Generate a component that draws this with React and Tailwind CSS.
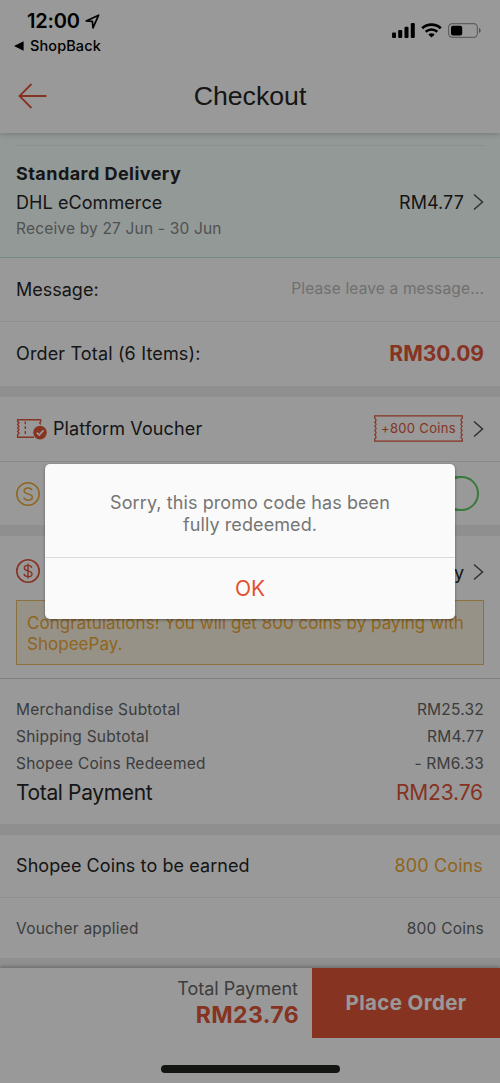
import React, { useState } from "react";

const summary = [
  { label: "Merchandise Subtotal", value: "RM25.32" },
  { label: "Shipping Subtotal", value: "RM4.77" },
  { label: "Shopee Coins Redeemed", value: "- RM6.33" },
];

const Chevron = () => (
  <svg className="ml-[9px] h-[18px] w-[11px]" viewBox="0 0 11 18" fill="none">
    <path d="M1 1.5L9.5 9L1 16.5" stroke="#50505f" strokeWidth="1.5" />
  </svg>
);

const Gap = () => <div className="h-[11px] shrink-0 bg-[#eeeeee]" />;

const StatusBar = () => (
  <div className="flex h-[60px] justify-between text-black">
    <div className="pl-[14px] pt-[9px]">
      <div className="flex h-6 items-center pl-[13px]">
        <span className="text-[20px] font-semibold leading-6 tracking-[-0.2px]">12:00</span>
        <svg className="ml-[5px] h-[15px] w-[15px]" viewBox="0 0 15 15" fill="none">
          <path d="M1.2 6.9L13.6 1.2L8 13.8L7.4 7.4Z" stroke="#000" strokeWidth="1.7" strokeLinejoin="round" />
        </svg>
      </div>
      <div className="flex h-6 items-center pt-px">
        <svg className="h-[10px] w-[10px]" viewBox="0 0 10 10">
          <path d="M0 5L9.6 0.3V9.7Z" fill="#000" />
        </svg>
        <span className="ml-[6px] text-[14.5px] font-medium leading-6 tracking-[0.1px]">ShopBack</span>
      </div>
    </div>
    <div className="flex items-start pr-[19px] pt-[23px]">
      <svg className="h-[15px] w-[23px]" viewBox="0 0 23 15">
        <rect x="0" y="9.5" width="4" height="5.5" rx="1" />
        <rect x="6.2" y="7" width="4" height="8" rx="1" />
        <rect x="12.5" y="3.8" width="4" height="11.2" rx="1" />
        <rect x="18.8" y="0" width="4" height="15" rx="1" />
      </svg>
      <svg className="ml-[6px] h-[15px] w-[21px]" viewBox="0 0 21 15" fill="none">
        <path d="M1.2 5.2C6.4 0.3 14.6 0.3 19.8 5.2" stroke="#000" strokeWidth="2.7" />
        <path d="M4.7 8.8C8 5.8 13 5.8 16.3 8.8" stroke="#000" strokeWidth="2.6" />
        <path d="M10.5 14.6L7.3 11.5C9.1 9.9 11.9 9.9 13.7 11.5Z" fill="#000" />
      </svg>
      <svg className="ml-[6px] h-[15px] w-[33px]" viewBox="0 0 33 15" fill="none">
        <rect x="0.6" y="0.6" width="28.8" height="13.8" rx="3.8" stroke="#a0a0a0" strokeWidth="1.2" />
        <rect x="3" y="2.8" width="11.2" height="9.6" rx="2" fill="#000" />
        <path d="M31 5V10C33.2 9.2 33.2 5.8 31 5Z" fill="#8a8a8a" />
      </svg>
    </div>
  </div>
);

const VoucherIcon = () => (
  <svg className="h-[22px] w-[31px]" viewBox="0 0 31 22" fill="none">
    <path
      d="M25 1.8H1.6V3.6L3 4.8L1.6 6.5L3 8.2L1.6 9.9L3 11.6L1.6 13.3L3 15L1.6 16.7V19.2H18"
      stroke="#e0553a"
      strokeWidth="1.4"
    />
    <path d="M24.8 1.8V3.6L23.6 4.8L24.8 6.4" stroke="#e0553a" strokeWidth="1.3" />
    <path d="M9.3 3.5V18" stroke="#e0553a" strokeWidth="1.4" strokeDasharray="2.8 2" />
    <circle cx="24" cy="14.6" r="6.8" fill="#e0553a" />
    <path d="M20.8 14.6L23.2 17L27.4 12.4" stroke="#fff" strokeWidth="1.7" />
  </svg>
);

const CoinsBadge = () => (
  <div className="relative flex h-[27px] w-[89px] items-center justify-center">
    <svg className="absolute inset-0 h-[27px] w-[89px]" viewBox="0 0 89 27" fill="none">
      <path
        d="M0.7 0.8H88.3V3Q85.6 5.2 88.3 7.2Q85.6 9.3 88.3 11.4Q85.6 13.5 88.3 15.6Q85.6 17.7 88.3 19.8Q85.6 21.9 88.3 24V26.2H0.7V24Q3.4 21.9 0.7 19.8Q3.4 17.7 0.7 15.6Q3.4 13.5 0.7 11.4Q3.4 9.3 0.7 7.2Q3.4 5.2 0.7 3Z"
        stroke="#e0553a"
        strokeWidth="1.2"
      />
    </svg>
    <span className="text-[13px] tracking-[0.32px] text-[#e0553a]">+800 Coins</span>
  </div>
);

const App = () => {
  const [open, setOpen] = useState(true);
  const [useCoins, setUseCoins] = useState(true);

  return (
    <div className="relative flex h-[1083px] w-[500px] flex-col overflow-hidden whitespace-nowrap bg-white font-['Inter',sans-serif] text-[18px] text-[#262626]">
      <header className="z-10 h-[133px] shrink-0 bg-white shadow-[0_1px_6px_rgba(0,0,0,0.22)]">
        <StatusBar />
        <div className="grid h-[73px] grid-cols-[80px_1fr_80px] items-center">
          <svg className="mb-px ml-[18px] h-[26px] w-[29px]" viewBox="0 0 29 26" fill="none">
            <path d="M28.5 13H1.5M13.5 1L1.5 13L13.5 25" stroke="#e0553a" strokeWidth="1.8" />
          </svg>
          <h1 className="text-center font-['Liberation_Sans',sans-serif] text-[26.7px]">Checkout</h1>
        </div>
      </header>

      <section className="h-[125px] shrink-0 border-b border-[#bce6de] bg-[#f6fffc] px-4 pt-[12px]">
        <div className="h-px bg-[#e9efed]" />
        <div className="mt-[14px] text-[18px] font-bold leading-7 tracking-[0.45px]">Standard Delivery</div>
        <div className="flex h-7 items-center justify-between tracking-[0.08px]">
          <span>DHL eCommerce</span>
          <span className="flex items-center">
            RM4.77
            <Chevron />
          </span>
        </div>
        <div className="text-[15.5px] leading-[26px] tracking-[0.18px] text-[#888888]">Receive by 27 Jun - 30 Jun</div>
      </section>

      <section className="shrink-0 bg-white">
        <div className="flex h-[64px] items-center justify-between border-b border-[#eeeeee] px-4">
          <span>Message:</span>
          <span className="pb-[2px] text-[15.5px] tracking-[0.15px] text-[#bbbbbb]">Please leave a message...</span>
        </div>
        <div className="flex h-[64px] items-center justify-between px-4">
          <span className="pb-px tracking-[0.15px]">Order Total (6 Items):</span>
          <span className="text-[21px] font-bold text-[#e0553a]">RM30.09</span>
        </div>
      </section>
      <Gap />

      <section className="shrink-0 bg-white">
        <div className="flex h-[65px] items-center justify-between border-b border-[#e6e6e6] px-4">
          <span className="flex items-center">
            <VoucherIcon />
            <span className="ml-[6px] pb-[2px] tracking-[0.12px]">Platform Voucher</span>
          </span>
          <span className="flex items-center pb-px">
            <CoinsBadge />
            <span className="ml-[1px]">
              <Chevron />
            </span>
          </span>
        </div>
        <div className="flex h-[63px] items-center justify-between px-4">
          <span className="flex items-center">
            <svg className="h-6 w-6" viewBox="0 0 24 24" fill="none" stroke="#f0a934">
              <circle cx="12" cy="12" r="11.2" strokeWidth="1.5" />
              <path d="M16 8.3C15.3 6.6 13.8 6 12 6C9.7 6 8.2 7.1 8.2 8.9C8.2 13 16.4 10.8 16.4 15.1C16.4 17 14.7 18.2 12.3 18.2C10 18.2 8.3 17.2 7.8 15.4" strokeWidth="1.5" />
            </svg>
          </span>
          <button
            onClick={() => setUseCoins(!useCoins)}
            className={`mr-[5px] flex h-[35px] w-[55px] items-center rounded-full p-[2px] ${
              useCoins ? "justify-end bg-[#5ccb62]" : "justify-start bg-gray-300"
            }`}
          >
            <span className="h-[31px] w-[31px] rounded-full bg-white" />
          </button>
        </div>
      </section>
      <Gap />

      <section className="h-[143px] shrink-0 border-b border-[#d8d8d8] bg-white px-4">
        <div className="flex h-[64px] items-center justify-between pt-[6px]">
          <svg className="h-6 w-6" viewBox="0 0 24 24" fill="none" stroke="#e0553a">
            <circle cx="12" cy="12" r="11.2" strokeWidth="1.6" />
            <path d="M15.8 8.8C15.4 7.2 14 6.4 12 6.4C9.8 6.4 8.3 7.4 8.3 9C8.3 13 16 10.8 16 14.9C16 16.6 14.4 17.6 12.1 17.6C9.8 17.6 8.3 16.6 8 14.9M12 4.4V19.6" strokeWidth="1.4" />
          </svg>
          <span className="flex items-center pt-[2px]">
            ShopeePay
            <Chevron />
          </span>
        </div>
        <div className="h-[65px] border border-[#e6bd68] bg-[#fbf4e1] pl-[10px] pt-[12px] text-[17px] leading-[21px] tracking-[0.03px] text-[#eea834]">
          Congratulations! You will get 800 coins by paying with
          <br />
          ShopeePay.
        </div>
      </section>

      <section className="h-[145px] shrink-0 bg-white px-4 pt-[17px]">
        {summary.map((row) => (
          <div
            key={row.label}
            className="flex h-[27px] items-center justify-between text-[15.5px] tracking-[0.23px] text-[#666666]"
          >
            <span>{row.label}</span>
            <span>{row.value}</span>
          </div>
        ))}
        <div className="flex h-[32px] items-center justify-between text-[21px]">
          <span className="tracking-[-0.36px]">Total Payment</span>
          <span className="pr-px tracking-[-0.15px] text-[#e0553a]">RM23.76</span>
        </div>
      </section>
      <Gap />

      <section className="shrink-0 bg-white">
        <div className="flex h-[63px] items-center justify-between border-b border-[#eeeeee] px-4 pb-[2px]">
          <span className="tracking-[0.08px]">Shopee Coins to be earned</span>
          <span className="pr-px tracking-[0.12px] text-[#eea834]">800 Coins</span>
        </div>
        <div className="flex h-[60px] items-center justify-between px-4 pt-px text-[15.5px] tracking-[0.22px] text-[#666666]">
          <span>Voucher applied</span>
          <span>800 Coins</span>
        </div>
      </section>
      <div className="h-[10px] shrink-0 bg-[#eeeeee]" />

      <footer className="h-[115px] shrink-0 bg-white shadow-[0_-1px_4px_rgba(0,0,0,0.3)]">
        <div className="flex h-[70px] justify-end">
          <div className="pr-[14px] pt-[8px] text-right">
            <div className="text-[18px] leading-[26px] text-[#666666]">Total Payment</div>
            <div className="-mr-px text-[23px] font-bold leading-[26px] tracking-[0.4px] text-[#e0553a]">RM23.76</div>
          </div>
          <button className="h-[70px] w-[188px] bg-[#e0553a] text-[20.5px] font-bold tracking-[0.36px] text-white">
            Place Order
          </button>
        </div>
      </footer>

      {open && (
        <div className="absolute inset-0 z-20 flex items-start justify-center bg-black/40 pt-[464px]">
          <div className="h-[155px] w-[410px] rounded-[5px] bg-[#fafafa] text-center shadow-[0_1px_3px_rgba(0,0,0,0.4)]">
            <div className="h-[94px] border-b border-[#dadada] pt-[28px] text-[18px] leading-[22px] tracking-[0.09px] text-[#757575]">
              Sorry, this promo code has been
              <br />
              fully redeemed.
            </div>
            <button onClick={() => setOpen(false)} className="h-[60px] w-full pt-[2px] text-[21px] tracking-[-0.2px] text-[#e2512f]">
              OK
            </button>
          </div>
        </div>
      )}
      <div className="absolute bottom-[10px] left-[161px] z-30 h-[8px] w-[179px] rounded-full bg-[#131513]" />
    </div>
  );
};

export default App;
